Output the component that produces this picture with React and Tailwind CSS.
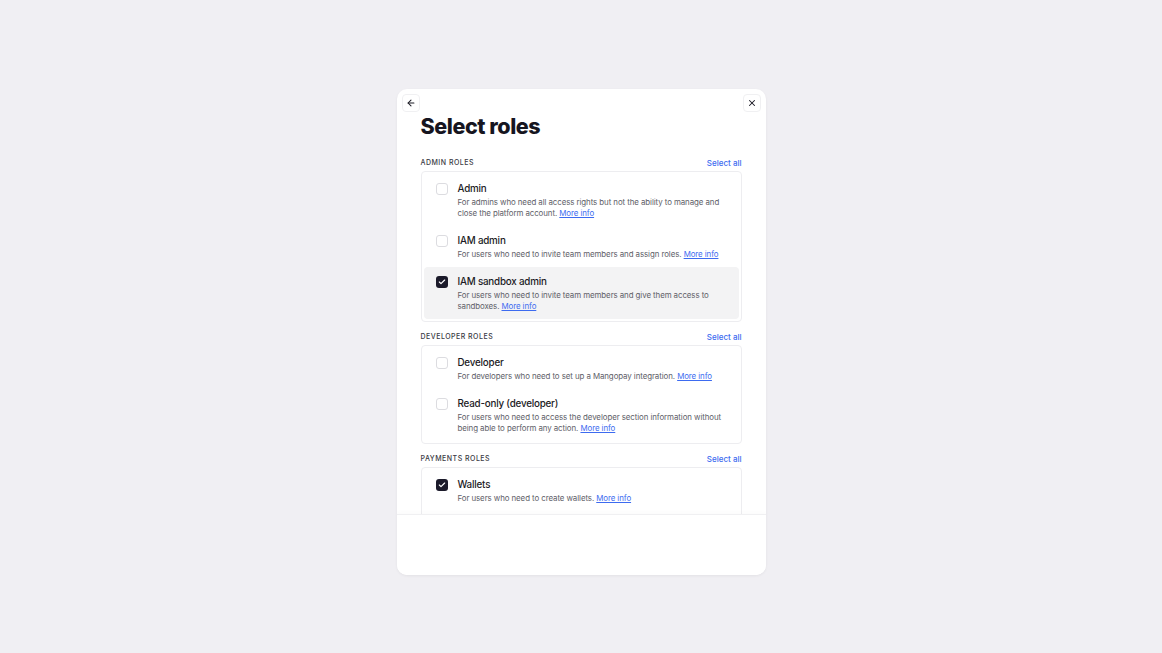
import { ArrowLeft, X, Check } from 'lucide-react';

const sections = [
  {
    label: 'Admin roles',
    roles: [
      { name: 'Admin', desc: 'For admins who need all access rights but not the ability to manage and close the platform account.', checked: false },
      { name: 'IAM admin', desc: 'For users who need to invite team members and assign roles.', checked: false },
      { name: 'IAM sandbox admin', desc: 'For users who need to invite team members and give them access to sandboxes.', checked: true, hover: true },
    ],
  },
  {
    label: 'Developer roles',
    roles: [
      { name: 'Developer', desc: 'For developers who need to set up a Mangopay integration.', checked: false },
      { name: 'Read-only (developer)', desc: 'For users who need to access the developer section information without being able to perform any action.', checked: false },
    ],
  },
  {
    label: 'Payments roles',
    roles: [
      { name: 'Wallets', desc: 'For users who need to create wallets.', checked: true },
      { name: 'Payouts', desc: 'For users who need to create payouts.', checked: false },
    ],
  },
];

function RoleItem({ role }) {
  return (
    <div className={`flex gap-[10px] rounded-[4px] px-3 pt-[8px] pb-[7px] ${role.hover ? 'bg-[#f3f3f4]' : ''}`}>
      <div className="pt-[1px]">
        {role.checked ? (
          <div className="w-3 h-3 rounded-[3px] bg-[#1b1a2a] flex items-center justify-center">
            <Check size={8} strokeWidth={3.5} className="text-white" />
          </div>
        ) : (
          <div className="w-3 h-3 rounded-[3px] border border-[#dcdce0] bg-white" />
        )}
      </div>
      <div className="flex-1">
        <div className="text-[9.8px] leading-[14px] font-medium tracking-[-0.02em] text-[#1b1a24]">{role.name}</div>
        <p className="mt-[1px] text-[7.9px] leading-[11px] tracking-[-0.01em] text-[#606068]">
          {role.desc}{' '}
          <a className="text-[#3d6bf0] underline">More info</a>
        </p>
      </div>
    </div>
  );
}

function App() {
  return (
    <div className="min-h-screen bg-[#f0eff3] flex items-start justify-center pt-[89px]" style={{ fontFamily: 'Inter, "Noto Sans", sans-serif' }}>
      <div className="w-[369px] h-[486px] bg-white rounded-[10px] shadow-[0_1px_3px_rgba(0,0,0,0.06)] flex flex-col overflow-hidden">
        {/* Scrollable content */}
        <div className="flex-1 overflow-hidden">
          <div className="flex justify-between px-[5px] pt-[5px]">
            <button className="w-[18px] h-[18px] rounded-[4px] border border-[#f0f0f2] flex items-center justify-center text-[#1b1a24]">
              <ArrowLeft size={10} strokeWidth={2.5} />
            </button>
            <button className="w-[18px] h-[18px] rounded-[4px] border border-[#f0f0f2] flex items-center justify-center text-[#1b1a24]">
              <X size={10} strokeWidth={2.5} />
            </button>
          </div>
          <div className="px-6">
            <h1 className="text-[21.5px] leading-[28px] font-extrabold tracking-[-0.02em] text-[#16151f]">Select roles</h1>
            {sections.map((s, i) => (
              <div key={s.label} className={i === 0 ? 'mt-[16px]' : 'mt-[8px]'}>
                <div className="flex justify-between items-end mb-[3px] h-[12px]">
                  <span className="text-[7px] uppercase tracking-[0.07em] font-medium text-[#3a3a44]">{s.label}</span>
                  <a className="text-[8px] text-[#3d6bf0] font-medium leading-[10px]">Select all</a>
                </div>
                <div className="border border-[#ededf0] rounded-[4px] p-[2px]">
                  {s.roles.map((r) => (
                    <RoleItem key={r.name} role={r} />
                  ))}
                </div>
              </div>
            ))}
          </div>
        </div>
        {/* Footer */}
        <div className="h-[61px] bg-white border-t border-[#f0f0f2] shadow-[0_-2px_4px_rgba(0,0,0,0.02)]" />
      </div>
    </div>
  );
}

export default App;
